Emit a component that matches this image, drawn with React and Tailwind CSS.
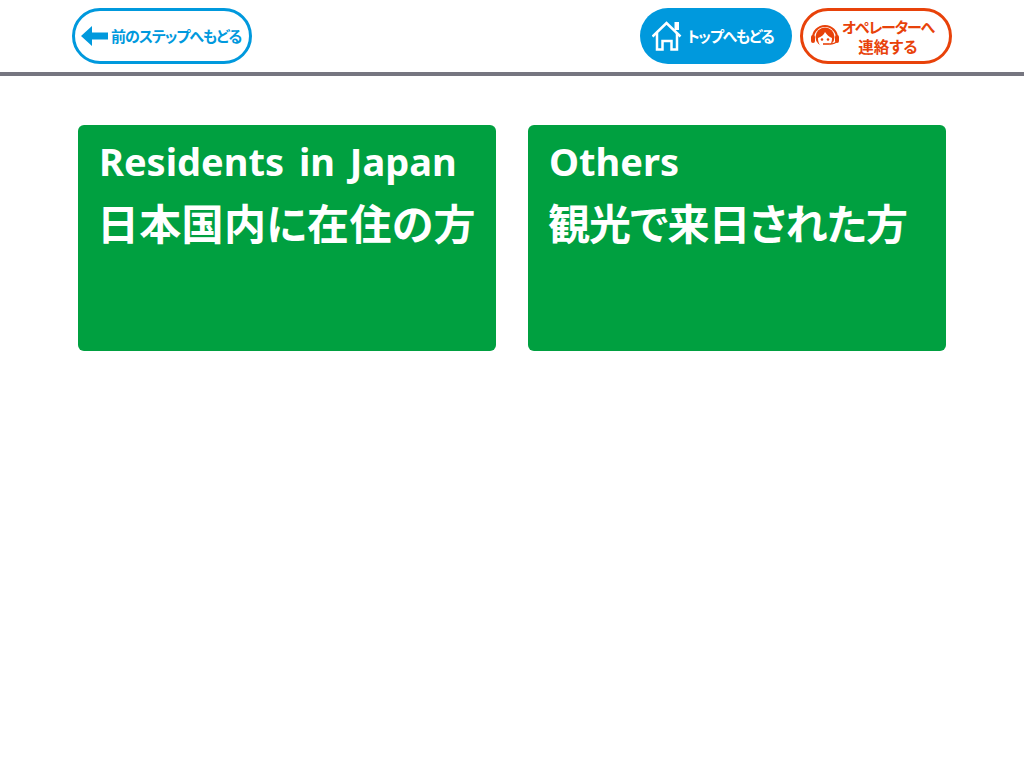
function ArrowLeft() {
  return (
    <svg width="28" height="20" viewBox="0 0 28 20" className="shrink-0">
      <path d="M0 10 L11 0 L11 6.5 L27 6.5 L27 13.5 L11 13.5 L11 20 Z" fill="#0099dd" />
    </svg>
  );
}

function HouseIcon() {
  return (
    <svg width="30" height="30" viewBox="0 0 30 30" fill="none" className="shrink-0">
      <rect x="22.500" y="1" width="4.500" height="8" fill="#fff" />
      <path d="M0.500 15.500 L14.500 2 L28.500 15.500" stroke="#fff" strokeWidth="2.500" />
      <path d="M5 12 L5 28.500 L10.500 28.500 L10.500 20 L19.500 20 L19.500 28.500 L25 28.500 L25 12" stroke="#fff" strokeWidth="2.500" />
    </svg>
  );
}

function OperatorIcon() {
  return (
    <svg width="30" height="30" viewBox="0 0 30 30" fill="none" className="shrink-0">
      <path d="M3 17 A12 12 0 0 1 27 17" stroke="#e8420a" strokeWidth="2.200" />
      <rect x="1" y="14" width="4" height="8" rx="2" fill="#e8420a" />
      <rect x="25" y="14" width="4" height="8" rx="2" fill="#e8420a" />
      <circle cx="15" cy="16" r="9.500" fill="#e8420a" />
      <path d="M8 17 C11 16 14 14 15 11 C17 14 19 16 22 17 C22 23 19 27 15 27 C11 27 8 23 8 17 Z" fill="#fff" />
      <circle cx="12" cy="18.500" r="1.300" fill="#e8420a" />
      <circle cx="18" cy="18.500" r="1.300" fill="#e8420a" />
      <path d="M13 23 L19 23" stroke="#e8420a" strokeWidth="1.600" />
      <path d="M19 23 C23 23 26 22 27 20" stroke="#e8420a" strokeWidth="1.400" />
    </svg>
  );
}

function Card({ en, ja, jaClass }) {
  return (
    <button className="w-[418px] h-[226px] bg-[#00a040] rounded-[6px] text-white text-left font-bold pl-[21px] pt-[12px] flex flex-col items-start">
      <span className="text-[38px] leading-[48px] [word-spacing:5px]">{en}</span>
      <span className={"text-[42px] leading-[56px] mt-[11px] whitespace-nowrap [font-feature-settings:'palt'] " + jaClass}>{ja}</span>
    </button>
  );
}

export default function App() {
  return (
    <div className="min-h-[768px] bg-white font-['Noto_Sans','Noto_Sans_CJK_JP',sans-serif]">
      <header className="h-[76px] border-b-4 border-[#767680] flex items-start justify-between pt-[8px] pl-[72px] pr-[72px]">
        <button className="w-[180px] h-[56px] rounded-full border-[3px] border-[#0099dd] flex items-center pl-[6px] gap-[2px] text-[#0099dd] font-bold text-[15px] tracking-[-1px] whitespace-nowrap [font-feature-settings:'palt']">
          <ArrowLeft />
          <span>前のステップへもどる</span>
        </button>
        <div className="flex gap-[8px]">
          <button className="w-[152px] h-[56px] rounded-full bg-[#0099dd] flex items-center pl-[12px] gap-[5px] text-white font-bold text-[15px] tracking-[-1.2px] whitespace-nowrap [font-feature-settings:'palt']">
            <HouseIcon />
            <span>トップへもどる</span>
          </button>
          <button className="w-[152px] h-[56px] rounded-full border-[3px] border-[#e8420a] flex items-center pl-[7px] gap-[2px] text-[#e8420a] font-bold leading-[20px] [font-feature-settings:'palt']">
            <OperatorIcon />
            <span className="flex flex-col items-center whitespace-nowrap mt-[2px]">
              <span className="text-[15px] tracking-[-1.2px]">オペレーターへ</span>
              <span className="text-[15.5px]">連絡する</span>
            </span>
          </button>
        </div>
      </header>
      <main className="flex gap-[32px] pl-[78px] pt-[49px]">
        <Card en="Residents in Japan" ja="日本国内に在住の方" jaClass="-ml-[2px] tracking-[0.3px]" />
        <Card en="Others" ja="観光で来日された方" jaClass="-ml-[1px] tracking-[-0.9px]" />
      </main>
    </div>
  );
}
